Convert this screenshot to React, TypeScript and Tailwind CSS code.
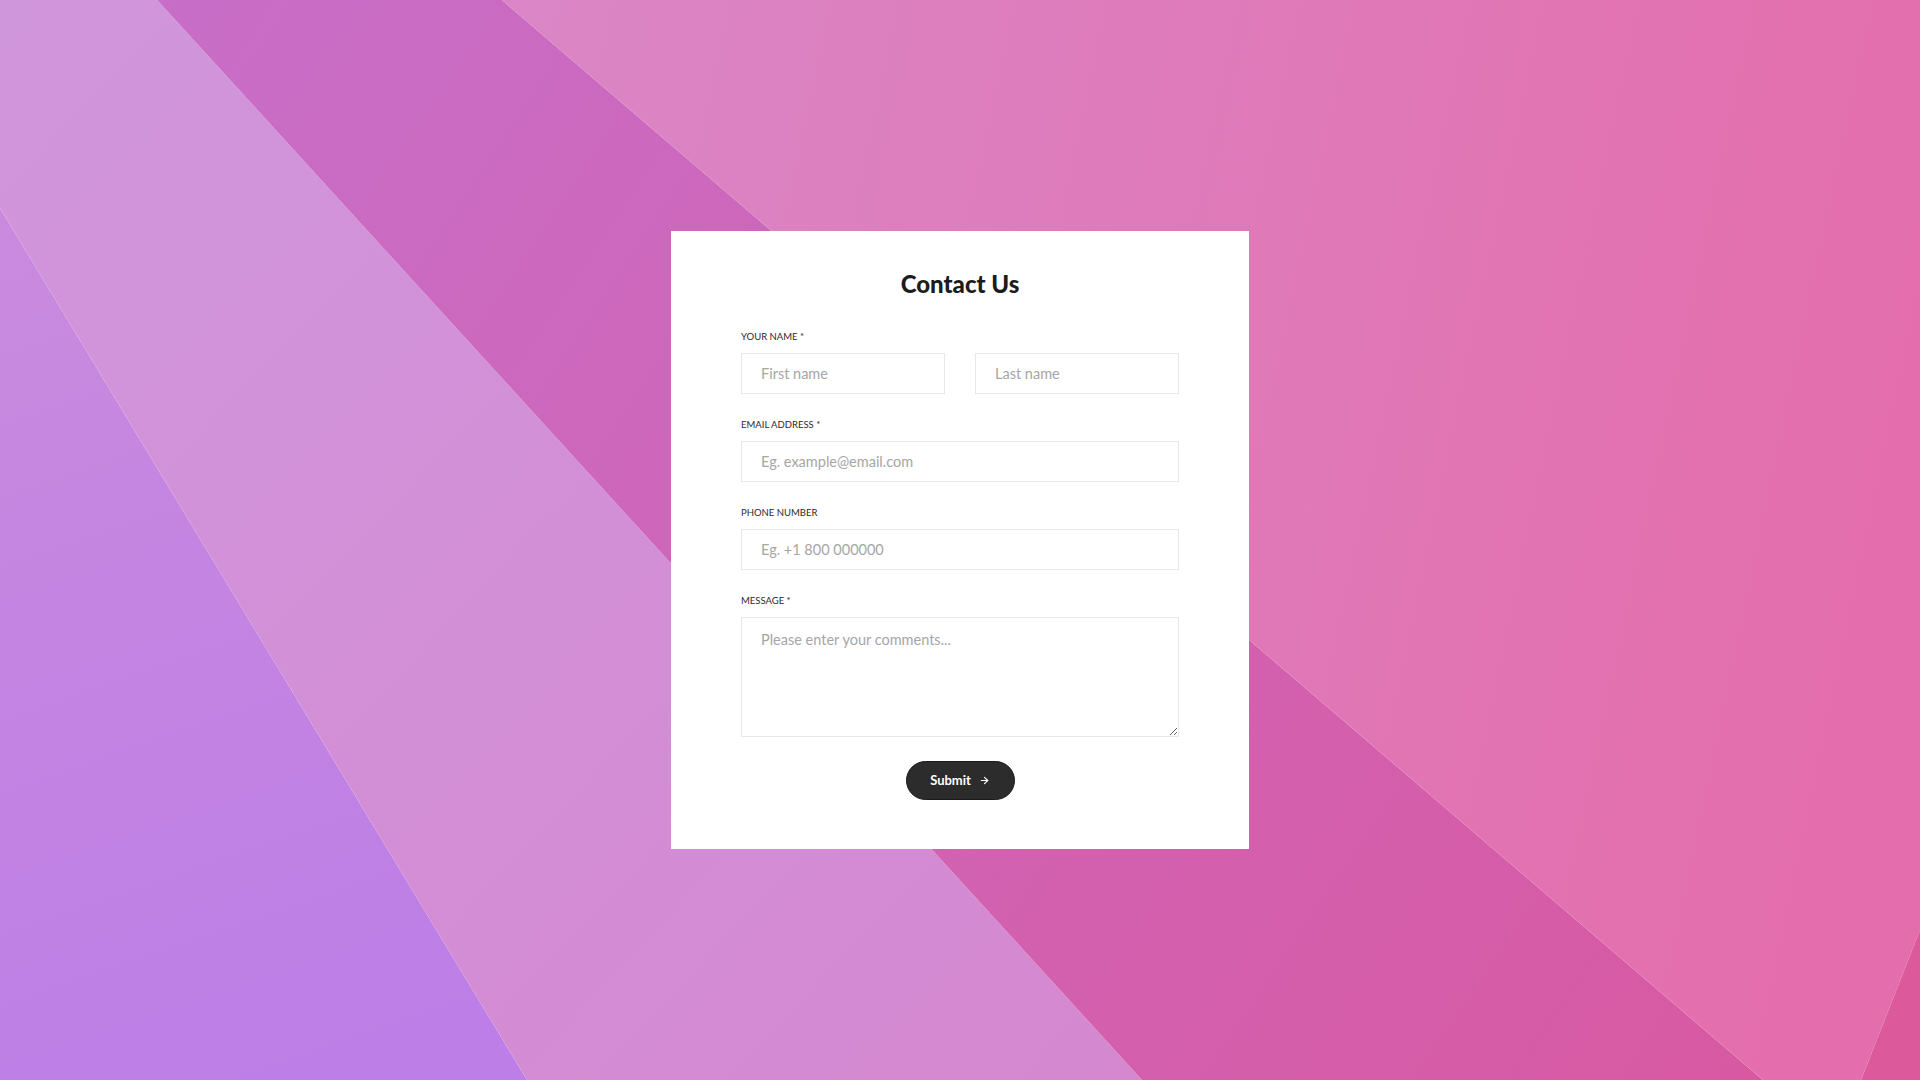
import React from "react";
import { ArrowRight } from "lucide-react";

function Background() {
  return (
    <svg
      className="absolute inset-0 h-full w-full"
      viewBox="0 0 1920 1080"
      preserveAspectRatio="none"
      aria-hidden="true"
    >
      <defs>
        <linearGradient id="g1" gradientUnits="userSpaceOnUse" x1="0" y1="208" x2="300" y2="1080">
          <stop offset="0" stopColor="#c98ade" />
          <stop offset="1" stopColor="#bd7ee7" />
        </linearGradient>
        <linearGradient id="g2" gradientUnits="userSpaceOnUse" x1="0" y1="0" x2="1142" y2="1080">
          <stop offset="0" stopColor="#d096dc" />
          <stop offset="1" stopColor="#d588d0" />
        </linearGradient>
        <linearGradient id="g3" gradientUnits="userSpaceOnUse" x1="157" y1="0" x2="1763" y2="1080">
          <stop offset="0" stopColor="#c86ec8" />
          <stop offset="1" stopColor="#d859a2" />
        </linearGradient>
        <linearGradient id="g4" gradientUnits="userSpaceOnUse" x1="502" y1="0" x2="1920" y2="300">
          <stop offset="0" stopColor="#da86c6" />
          <stop offset="1" stopColor="#e46ead" />
        </linearGradient>
      </defs>
      <polygon points="0,208 527,1080 0,1080" fill="url(#g1)" />
      <polygon points="0,0 157,0 1142,1080 527,1080 0,208" fill="url(#g2)" />
      <polygon points="157,0 502,0 1763,1080 1142,1080" fill="url(#g3)" />
      <polygon points="502,0 1920,0 1920,930 1861,1080 1763,1080" fill="url(#g4)" />
      <polygon points="1920,930 1920,1080 1861,1080" fill="#dc5a9c" />
    </svg>
  );
}

function Label({ children }: { children: React.ReactNode }) {
  return (
    <label className="mb-[9px] block text-[9.5px] leading-[14px] uppercase text-[#2a2a2a]">
      {children}
    </label>
  );
}

const inputCls =
  "h-[41px] w-full border border-[#e8e8e8] bg-white pl-[19px] pr-3 text-[14.5px] text-[#333] outline-none placeholder:text-[#a6a6a6]";

export default function App() {
  return (
    <div
      className="relative flex h-[1080px] w-full items-center justify-center overflow-hidden"
      style={{ fontFamily: "Lato, 'Noto Sans', sans-serif" }}
    >
      <Background />
      <div className="relative w-[578px] bg-white px-[70px] pt-[38px] pb-[49px]">
        <h1 className="text-center text-[24px] font-black leading-[29px] text-[#1c1c1c]">
          Contact Us
        </h1>
        <form className="mt-[32px] flex flex-col gap-[24px]" onSubmit={(e) => e.preventDefault()}>
          <div>
            <Label>Your name *</Label>
            <div className="grid grid-cols-2 gap-[30px]">
              <input className={inputCls} placeholder="First name" />
              <input className={inputCls} placeholder="Last name" />
            </div>
          </div>
          <div>
            <Label>Email address *</Label>
            <input className={inputCls} placeholder="Eg. example@email.com" />
          </div>
          <div>
            <Label>Phone number</Label>
            <input className={inputCls} placeholder="Eg. +1 800 000000" />
          </div>
          <div>
            <Label>Message *</Label>
            <textarea
              className="block h-[120px] w-full border border-[#e8e8e8] bg-white px-[19px] pt-[12px] text-[14.5px] leading-[20px] text-[#333] outline-none placeholder:text-[#a6a6a6]"
              placeholder="Please enter your comments..."
            />
          </div>
          <div className="flex justify-center">
            <button
              type="submit"
              className="flex h-[39px] w-[109px] items-center justify-center gap-[8px] rounded-full border border-[#1a1a1a] bg-[#2c2c2c] text-[13px] font-bold text-white"
            >
              Submit
              <ArrowRight size={11} strokeWidth={2.5} />
            </button>
          </div>
        </form>
      </div>
    </div>
  );
}
